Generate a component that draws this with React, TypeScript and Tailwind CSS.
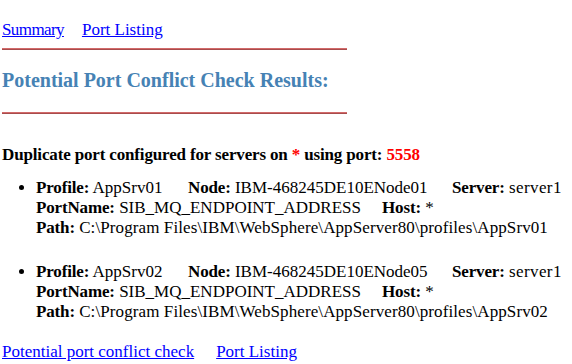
import React from "react";

type Conflict = {
  profile: string;
  node: string;
  server: string;
  portName: string;
  host: string;
  path: string;
};

const conflicts: Conflict[] = [
  {
    profile: "AppSrv01",
    node: "IBM-468245DE10ENode01",
    server: "server1",
    portName: "SIB_MQ_ENDPOINT_ADDRESS",
    host: "*",
    path: "C:\\Program Files\\IBM\\WebSphere\\AppServer80\\profiles\\AppSrv01",
  },
  {
    profile: "AppSrv02",
    node: "IBM-468245DE10ENode05",
    server: "server1",
    portName: "SIB_MQ_ENDPOINT_ADDRESS",
    host: "*",
    path: "C:\\Program Files\\IBM\\WebSphere\\AppServer80\\profiles\\AppSrv02",
  },
];

function Rule() {
  return (
    <div className="w-[345px] border-t border-b border-t-[#d26a6a] border-b-[#a84c4c]" />
  );
}

function Field({
  label,
  value,
  className = "",
  valueClass = "",
}: {
  label: string;
  value: string;
  className?: string;
  valueClass?: string;
}) {
  return (
    <span className={className}>
      <b className="tracking-[-0.15px]">{label}</b> <span className={valueClass}>{value}</span>
    </span>
  );
}

export default function App() {
  return (
    <div
      className="min-h-screen bg-white text-black pl-[2px] pt-[20px] text-[17px]"
      style={{ fontFamily: '"Liberation Serif", "Times New Roman", serif' }}
    >
      <div className="leading-[20px]">
        <a href="#" className="text-[#0000ff] underline tracking-[-0.6px]">Summary</a>
        <a href="#" className="text-[#0000ff] underline ml-[18px]">Port Listing</a>
      </div>

      <div className="mt-[8px]">
        <Rule />
      </div>

      <h2 className="mt-[18px] text-[20px] leading-[24px] font-bold text-[#4682b4]">
        Potential Port Conflict Check Results:
      </h2>

      <div className="mt-[20px]">
        <Rule />
      </div>

      <p className="mt-[31px] font-bold leading-[20px] tracking-[-0.15px]">
        Duplicate port configured for servers on <span className="text-[#ff0000]">*</span> using port:{" "}
        <span className="text-[#ff0000]">5558</span>
      </p>

      <ul className="mt-[13px] list-disc pl-[34px] flex flex-col gap-[24px]">
        {conflicts.map((c) => (
          <li key={c.profile} className="leading-[20px] whitespace-nowrap">
            <Field label="Profile:" value={c.profile} className="inline-block w-[152px]" />
            <Field label="Node:" value={c.node} className="inline-block w-[264px]" />
            <Field label="Server:" value={c.server} valueClass="tracking-[0.4px]" />
            <br />
            <Field label="PortName:" value={c.portName} className="inline-block w-[346px]" />
            <Field label="Host:" value={c.host} />
            <br />
            <Field label="Path:" value={c.path} valueClass="tracking-[0.1px]" />
          </li>
        ))}
      </ul>

      <div className="mt-[20px] leading-[20px]">
        <a href="#" className="text-[#0000ff] underline">Potential port conflict check</a>
        <a href="#" className="text-[#0000ff] underline ml-[22px]">Port Listing</a>
      </div>
    </div>
  );
}
